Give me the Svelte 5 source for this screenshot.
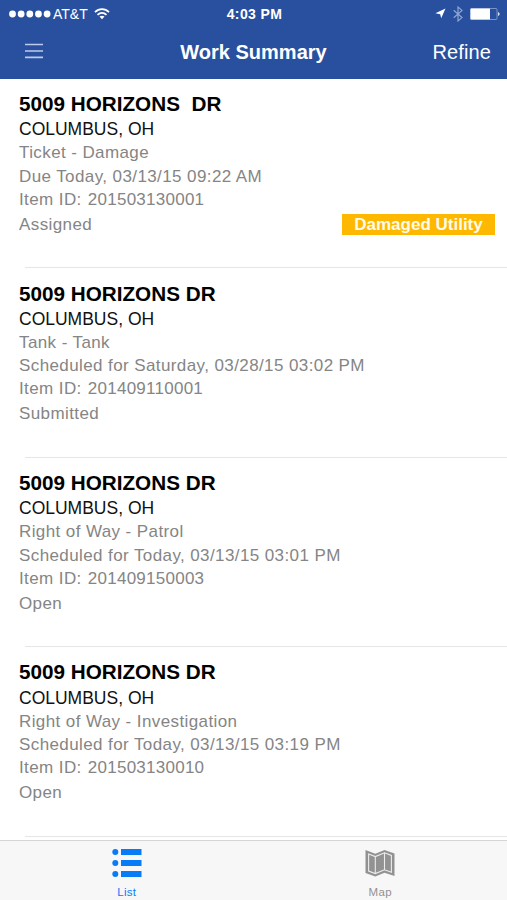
<script>
  let activeTab = 'list';

  const items = [
    {
      id: '201503130001',
      address: '5009 HORIZONS  DR',
      city: 'COLUMBUS, OH',
      type: 'Ticket - Damage',
      date: 'Due Today, 03/13/15 09:22 AM',
      status: 'Assigned',
      tag: 'Damaged Utility'
    },
    {
      id: '201409110001',
      address: '5009 HORIZONS DR',
      city: 'COLUMBUS, OH',
      type: 'Tank - Tank',
      date: 'Scheduled for Saturday, 03/28/15 03:02 PM',
      status: 'Submitted'
    },
    {
      id: '201409150003',
      address: '5009 HORIZONS DR',
      city: 'COLUMBUS, OH',
      type: 'Right of Way - Patrol',
      date: 'Scheduled for Today, 03/13/15 03:01 PM',
      status: 'Open'
    },
    {
      id: '201503130010',
      address: '5009 HORIZONS DR',
      city: 'COLUMBUS, OH',
      type: 'Right of Way - Investigation',
      date: 'Scheduled for Today, 03/13/15 03:19 PM',
      status: 'Open'
    }
  ];
</script>

<div class="app">
  <header>
    <div class="status-bar">
      <div class="carrier">
        <svg width="42" height="8" viewBox="0 0 42 8" fill="#fff">
          {#each [0, 1, 2, 3, 4] as dot}
            <circle cx={3.5 + dot * 8.65} cy="4" r="3.4" />
          {/each}
        </svg>
        <span>AT&amp;T</span>
        <svg width="16" height="12" viewBox="0 0 16 12" fill="none" stroke="#fff" stroke-width="1.7">
          <path d="M1 4.2C5 .1 11 .1 15 4.2" />
          <path d="M3.5 6.9C6.2 4.3 9.8 4.3 12.5 6.9" />
          <path d="M5.5 8.6C7 7.3 9 7.3 10.5 8.6L8 11.2Z" fill="#fff" stroke="none" />
        </svg>
      </div>
      <span class="time">4:03 PM</span>
      <div class="indicators">
        <svg width="11" height="11" viewBox="0 0 11 11" fill="#fff">
          <path d="M10.5.5L6.2 10.3L5.2 6.2L.4 5.2Z" />
        </svg>
        <svg class="bluetooth" width="10" height="16" viewBox="0 0 10 16" fill="none" stroke="#8fa5d3" stroke-width="1.2">
          <path d="M.7 4.3L9 11.6L5 15V1L9 4.4L.7 11.7" />
        </svg>
        <svg width="30" height="12" viewBox="0 0 30 12">
          <rect x=".5" y=".5" width="26.5" height="11" rx="1" fill="none" stroke="#8fa5d3" stroke-width=".8" />
          <rect x=".5" y=".5" width="19.5" height="11" rx=".6" fill="#fff" />
          <path d="M28.2 4C30 4.7 30 7.3 28.2 8Z" fill="#fff" />
        </svg>
      </div>
    </div>
    <div class="nav-bar">
      <button class="menu" aria-label="Menu">
        <svg width="18" height="16" viewBox="0 0 18 16" stroke="#bccbec" stroke-width="1.7">
          <path d="M0 1.5H18M0 8H18M0 14.3H18" />
        </svg>
      </button>
      <h1>Work Summary</h1>
      <button class="refine">Refine</button>
    </div>
  </header>

  <main>
    {#each items as item (item.id)}
      <article>
        <h2>{item.address}</h2>
        <p class="city">{item.city}</p>
        <p>{item.type}</p>
        <p>{item.date}</p>
        <p>Item ID: <span class="item-id">{item.id}</span></p>
        <div class="status">
          <span>{item.status}</span>
          {#if item.tag}
            <strong>{item.tag}</strong>
          {/if}
        </div>
      </article>
    {/each}
  </main>

  <nav>
    <button class:active={activeTab === 'list'} on:click={() => (activeTab = 'list')}>
      <svg width="30" height="30" viewBox="0 0 30 30" fill="currentColor">
        <circle cx="3.3" cy="4" r="3" />
        <circle cx="3.3" cy="15" r="3" />
        <circle cx="3.3" cy="26" r="3" />
        <path d="M9 1H29.5V7H9ZM9 12H29.5V18H9ZM9 23H29.5V29H9Z" />
      </svg>
      <span>List</span>
    </button>
    <button class:active={activeTab === 'map'} on:click={() => (activeTab = 'map')}>
      <svg width="30" height="30" viewBox="0 0 30 30">
        <path d="M.5 2L10.3 5.7L19.5 2L29.5 5.5V28L19.5 24.7L10.3 28.5L.5 25Z" fill="currentColor" />
        <path d="M3.6 6L10.3 8.6L19.5 4.8L26.4 7.5V24.2L19.5 21.8L10.3 25.6L3.6 23Z" fill="none" stroke="#ececec" stroke-width="1.1" />
        <path d="M10.3 8.5V25.5M19.5 4.8V22" stroke="#ececec" stroke-width="1.1" />
      </svg>
      <span>Map</span>
    </button>
  </nav>
</div>

<style>
  :global(body) {
    margin: 0;
  }
  .app {
    height: 900px;
    display: flex;
    flex-direction: column;
    overflow: hidden;
    background: #fff;
    font-family: "Liberation Sans", Arial, sans-serif;
  }
  button {
    padding: 0;
    border: none;
    background: none;
    font: inherit;
    color: inherit;
  }
  svg {
    display: block;
  }
  header {
    flex: none;
    height: 79px;
    background: #28509e;
    color: #fff;
  }
  .status-bar {
    height: 27px;
    padding: 0 7px 0 9px;
    display: grid;
    grid-template-columns: 1fr auto 1fr;
    align-items: center;
  }
  .carrier {
    display: flex;
    align-items: center;
    font-size: 14px;
  }
  .carrier span {
    margin: 0 6px 0 2px;
  }
  .time {
    font-size: 14px;
    font-weight: bold;
    letter-spacing: 0.4px;
  }
  .indicators {
    display: flex;
    justify-content: flex-end;
    align-items: center;
  }
  .bluetooth {
    margin: 0 7px;
  }
  .nav-bar {
    height: 50px;
    padding: 0 16px;
    display: grid;
    grid-template-columns: 1fr auto 1fr;
    align-items: center;
    font-size: 20px;
  }
  .menu {
    justify-self: start;
    margin: -2px 0 0 9px;
  }
  h1 {
    margin: 0;
    font-size: 20px;
  }
  .refine {
    justify-self: end;
    letter-spacing: 0.1px;
  }
  main {
    flex: 1;
    min-height: 0;
    overflow: hidden;
  }
  article {
    height: 189.4px;
    box-sizing: border-box;
    padding: 12.3px 12px 0 19px;
    background: linear-gradient(#e6e6e6, #e6e6e6) 25px 100% / 100% 1px no-repeat;
    color: #858585;
    font-size: 17px;
    letter-spacing: 0.4px;
  }
  h2 {
    margin: 0 0 1.2px;
    color: #000;
    font-size: 20.7px;
    line-height: 25px;
    letter-spacing: 0;
    white-space: pre;
  }
  p {
    margin: 0;
    line-height: 23.3px;
  }
  .city {
    color: #111;
    font-size: 17.5px;
    line-height: 24px;
    letter-spacing: 0;
  }
  .item-id {
    margin-left: 1px;
    letter-spacing: 0.25px;
  }
  .status {
    height: 21px;
    margin-top: 3px;
    display: flex;
    justify-content: space-between;
    align-items: center;
  }
  strong {
    width: 153px;
    height: 21px;
    background: #ffb800;
    color: #fffbe9;
    line-height: 22px;
    text-align: center;
    letter-spacing: 0;
  }
  nav {
    flex: none;
    height: 60px;
    box-sizing: border-box;
    display: flex;
    border-top: 1px solid #d5d5d5;
    background: #f7f7f7;
  }
  nav button {
    flex: 1;
    padding-top: 7px;
    display: flex;
    flex-direction: column;
    align-items: center;
    color: #929292;
    font-size: 11.5px;
    letter-spacing: 0.3px;
  }
  nav span {
    margin-top: 7px;
    line-height: 14px;
  }
  nav .active {
    color: #087cf7;
  }
</style>
